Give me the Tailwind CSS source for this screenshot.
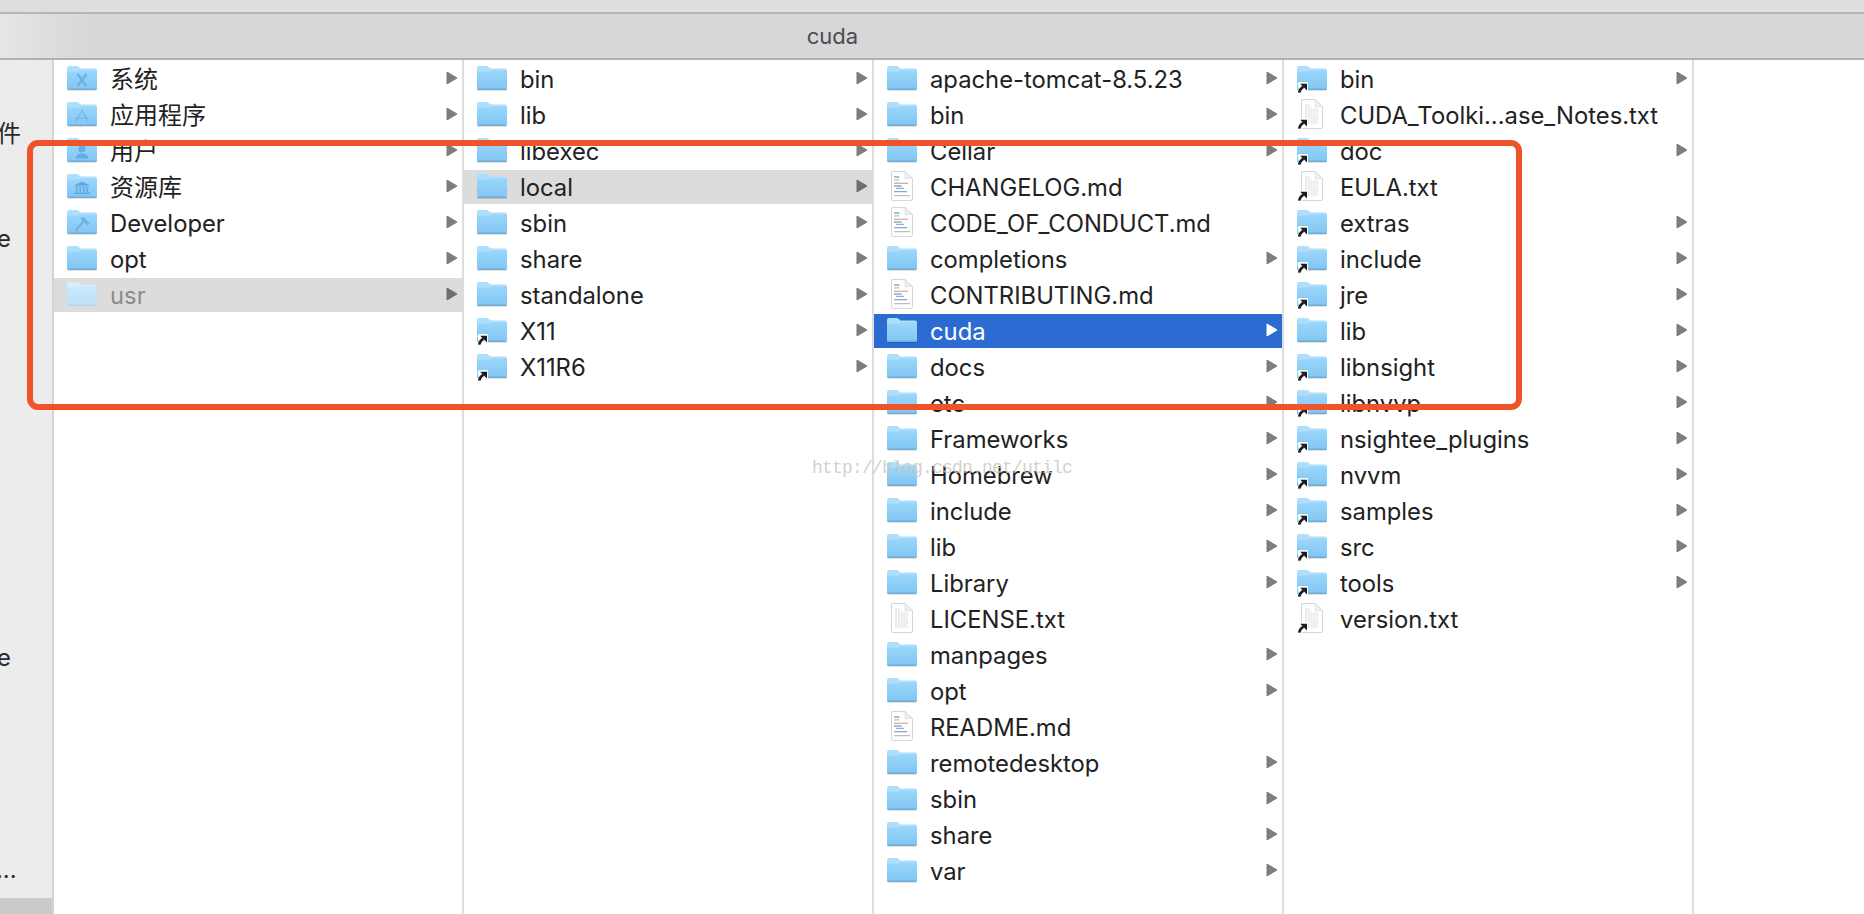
<!DOCTYPE html>
<html lang="zh">
<head>
<meta charset="utf-8">
<title>cuda</title>
<script src="https://cdn.jsdelivr.net/npm/@tailwindcss/browser@4"></script>
</head>
<body class="m-0 bg-white">
<svg class="absolute w-0 h-0" aria-hidden="true">
  <defs>
    <linearGradient id="fg" x1="0" y1="0" x2="0" y2="1"><stop offset="0" stop-color="#9ad6fb"/><stop offset="1" stop-color="#82c7f4"/></linearGradient>
    <linearGradient id="fl" x1="0" y1="0" x2="0" y2="1"><stop offset="0" stop-color="#c9e8fb"/><stop offset="1" stop-color="#bfe3f9"/></linearGradient>
    <g id="f">
      <rect x="0.5" y="27" width="29" height="2" rx="1" fill="#000" opacity="0.12"/>
      <path d="M0 6Q0 4 2 4H9.5Q11 4 12 5L13.5 6.5H28Q30 6.5 30 8.5V26Q30 28 28 28H2Q0 28 0 26Z" fill="#aedefb"/>
      <path d="M0 9.5H12L14 8.5H30V26Q30 27 29 27H1Q0 27 0 26Z" fill="url(#fg)"/>
      <path d="M0 26.6H30V26.8Q30 28 28.5 28H1.5Q0 28 0 26.8Z" fill="#72add6"/>
    </g>
    <g id="u">
      <path d="M0 6Q0 4 2 4H9.5Q11 4 12 5L13.5 6.5H28Q30 6.5 30 8.5V26Q30 28 28 28H2Q0 28 0 26Z" fill="#d7eefc"/>
      <path d="M0 9.5H12L14 8.5H30V26Q30 27 29 27H1Q0 27 0 26Z" fill="url(#fl)"/>
      <path d="M0 26.6H30V26.8Q30 28 28.5 28H1.5Q0 28 0 26.8Z" fill="#b4d6ec"/>
    </g>
    <g id="a">
      <path d="M0.6 32L1.6 27L0.6 22Q0.8 20 3 20H10Q11 20 11 21V28Q11 29 10 29H6.5L3 32Z" fill="#fff" opacity="0.95"/>
      <path d="M2.2 30.6Q2.8 27 6.4 24.6" fill="none" stroke="#1c1c1c" stroke-width="2.5"/>
      <path d="M3.2 21.8H10V28.6Z" fill="#1c1c1c"/>
    </g>
    <g id="d">
      <path d="M4.5 1.5H18L25.5 8.5V29Q25.5 30.5 24 30.5H6Q4.5 30.5 4.5 29Z" fill="#fff" stroke="#d6d6d6"/>
      <path d="M18 1.5V8.5H25.5Z" fill="#f0f0f0" stroke="#d6d6d6" stroke-width="0.6"/>
    </g>
    <g id="m">
      <use href="#d"/>
      <g stroke-width="1.3" fill="none">
        <path d="M7 7H12.3M7 16H14.7M7 21.7H20" stroke="#7ab4c0"/>
        <path d="M7 9.8H12M7 25.7H23" stroke="#c0c0c0"/>
        <path d="M7 13.3H21" stroke="#d8a8a8"/>
        <path d="M9 18.4H17" stroke="#b39bee"/>
      </g>
    </g>
    <g id="t">
      <use href="#d"/>
      <path d="M8 7H13M8 9H14M8 11H21M8 13H22M8 15H20M8 17H22M8 19H21M8 21H22M8 23H20M8 25H21" stroke="#c4c4c4" stroke-width="0.7" stroke-dasharray="2 0.8" fill="none"/>
    </g>
    <g id="r"><path d="M1 1L11 7L1 13Z" fill="currentColor" stroke="currentColor" stroke-width="1" stroke-linejoin="round"/></g>
  </defs>
</svg>

<div class="relative w-[1864px] h-[914px] overflow-hidden bg-white text-[23.8px] text-[#222] font-['Inter','Noto_Sans_CJK_SC',sans-serif] [&_span]:pt-[2px]">

  <header class="h-[60px] bg-[#d7d6d8] border-b-2 border-[#b1b1b1] flex flex-col">
    <div class="h-[14px] shrink-0 bg-[#dfdedf] border-b-2 border-[#b5b5b5]"></div>
    <div class="flex-1 flex items-center justify-center text-[22px] text-[#4c4c4c] bg-linear-to-r from-[#e6e6e6] to-[#d7d6d8] to-[5%] pr-[199px] pt-[1px]">cuda</div>
  </header>

  <div class="flex h-[854px]">
    <aside class="w-[54px] shrink-0 border-r-2 border-[#d4d4d4] bg-[#ececec] flex flex-col overflow-hidden text-[#2a2a2a] whitespace-nowrap">
      <div class="mt-[57px] h-[34px] leading-[34px] ml-[-3px] text-[24px]">件</div>
      <div class="mt-[71px] h-[34px] leading-[34px] ml-[-3px]">e</div>
      <div class="mt-[385px] h-[34px] leading-[34px] ml-[-3px]">e</div>
      <div class="mt-[178px] h-[34px] leading-[34px] ml-[-4px]">...</div>
      <div class="mt-auto h-[16px] bg-[#cbcbcb]"></div>
    </aside>

    <section class="w-[410px] shrink-0 border-r-2 border-[#dcdcdc] pt-[2px]">
      <div class="flex items-center h-[34px] mb-[2px] pl-[13px] pr-[4px]"><svg class="w-[30px] h-[34px] shrink-0" viewBox="0 0 30 34"><use href="#f"/><path d="M10.5 12L19.5 24M19.5 12L10.5 24" stroke="#6cb0e6" stroke-width="2.2" fill="none"/></svg><span class="ml-[13px] text-[24px]">系统</span><svg class="ml-auto mb-[2px] w-[12px] h-[14px] text-[#7d7d7d]" viewBox="0 0 12 14"><use href="#r"/></svg></div>
      <div class="flex items-center h-[34px] mb-[2px] pl-[13px] pr-[4px]"><svg class="w-[30px] h-[34px] shrink-0" viewBox="0 0 30 34"><use href="#f"/><path d="M9 23.5L15 12L21 23.5M8 20H22" stroke="#6cb0e6" stroke-width="1" fill="none"/></svg><span class="ml-[13px] text-[24px]">应用程序</span><svg class="ml-auto mb-[2px] w-[12px] h-[14px] text-[#7d7d7d]" viewBox="0 0 12 14"><use href="#r"/></svg></div>
      <div class="flex items-center h-[34px] mb-[2px] pl-[13px] pr-[4px]"><svg class="w-[30px] h-[34px] shrink-0" viewBox="0 0 30 34"><use href="#f"/><circle cx="15" cy="15" r="3.6" fill="#65ace3"/><path d="M8.5 24.5Q9 20.5 13.5 19.5H16.5Q21 20.5 21.5 24.5Z" fill="#65ace3"/></svg><span class="ml-[13px] text-[24px]">用户</span><svg class="ml-auto mb-[2px] w-[12px] h-[14px] text-[#7d7d7d]" viewBox="0 0 12 14"><use href="#r"/></svg></div>
      <div class="flex items-center h-[34px] mb-[2px] pl-[13px] pr-[4px]"><svg class="w-[30px] h-[34px] shrink-0" viewBox="0 0 30 34"><use href="#f"/><path d="M15 11.5L23 15.5H7ZM8 16.5H22V17.5H8ZM7 22.5H23V24H7ZM9 18H10.5V22H9ZM12.5 18H14V22H12.5ZM16 18H17.5V22H16ZM19.5 18H21V22H19.5Z" fill="#5ea6e0"/></svg><span class="ml-[13px] text-[24px]">资源库</span><svg class="ml-auto mb-[2px] w-[12px] h-[14px] text-[#7d7d7d]" viewBox="0 0 12 14"><use href="#r"/></svg></div>
      <div class="flex items-center h-[34px] mb-[2px] pl-[13px] pr-[4px]"><svg class="w-[30px] h-[34px] shrink-0" viewBox="0 0 30 34"><use href="#f"/><path d="M8.5 25L17.5 14" stroke="#6cb0e6" stroke-width="2" fill="none"/><path d="M13 12L17 11L22.5 17.5L20.5 19.5L16.5 15.5Z" fill="#6cb0e6"/></svg><span class="ml-[13px]">Developer</span><svg class="ml-auto mb-[2px] w-[12px] h-[14px] text-[#7d7d7d]" viewBox="0 0 12 14"><use href="#r"/></svg></div>
      <div class="flex items-center h-[34px] mb-[2px] pl-[13px] pr-[4px]"><svg class="w-[30px] h-[34px] shrink-0" viewBox="0 0 30 34"><use href="#f"/></svg><span class="ml-[13px]">opt</span><svg class="ml-auto mb-[2px] w-[12px] h-[14px] text-[#7d7d7d]" viewBox="0 0 12 14"><use href="#r"/></svg></div>
      <div class="flex items-center h-[34px] mb-[2px] pl-[13px] pr-[4px] bg-[#dcdcdc]"><svg class="w-[30px] h-[34px] shrink-0" viewBox="0 0 30 34"><use href="#u"/></svg><span class="ml-[13px] text-[#8b8b8b]">usr</span><svg class="ml-auto mb-[2px] w-[12px] h-[14px] text-[#6f6f6f]" viewBox="0 0 12 14"><use href="#r"/></svg></div>
    </section>

    <section class="w-[410px] shrink-0 border-r-2 border-[#dcdcdc] pt-[2px]">
      <div class="flex items-center h-[34px] mb-[2px] pl-[13px] pr-[4px]"><svg class="w-[30px] h-[34px] shrink-0" viewBox="0 0 30 34"><use href="#f"/></svg><span class="ml-[13px]">bin</span><svg class="ml-auto mb-[2px] w-[12px] h-[14px] text-[#7d7d7d]" viewBox="0 0 12 14"><use href="#r"/></svg></div>
      <div class="flex items-center h-[34px] mb-[2px] pl-[13px] pr-[4px]"><svg class="w-[30px] h-[34px] shrink-0" viewBox="0 0 30 34"><use href="#f"/></svg><span class="ml-[13px]">lib</span><svg class="ml-auto mb-[2px] w-[12px] h-[14px] text-[#7d7d7d]" viewBox="0 0 12 14"><use href="#r"/></svg></div>
      <div class="flex items-center h-[34px] mb-[2px] pl-[13px] pr-[4px]"><svg class="w-[30px] h-[34px] shrink-0" viewBox="0 0 30 34"><use href="#f"/></svg><span class="ml-[13px]">libexec</span><svg class="ml-auto mb-[2px] w-[12px] h-[14px] text-[#7d7d7d]" viewBox="0 0 12 14"><use href="#r"/></svg></div>
      <div class="flex items-center h-[34px] mb-[2px] pl-[13px] pr-[4px] bg-[#dcdcdc]"><svg class="w-[30px] h-[34px] shrink-0" viewBox="0 0 30 34"><use href="#f"/></svg><span class="ml-[13px]">local</span><svg class="ml-auto mb-[2px] w-[12px] h-[14px] text-[#6f6f6f]" viewBox="0 0 12 14"><use href="#r"/></svg></div>
      <div class="flex items-center h-[34px] mb-[2px] pl-[13px] pr-[4px]"><svg class="w-[30px] h-[34px] shrink-0" viewBox="0 0 30 34"><use href="#f"/></svg><span class="ml-[13px]">sbin</span><svg class="ml-auto mb-[2px] w-[12px] h-[14px] text-[#7d7d7d]" viewBox="0 0 12 14"><use href="#r"/></svg></div>
      <div class="flex items-center h-[34px] mb-[2px] pl-[13px] pr-[4px]"><svg class="w-[30px] h-[34px] shrink-0" viewBox="0 0 30 34"><use href="#f"/></svg><span class="ml-[13px]">share</span><svg class="ml-auto mb-[2px] w-[12px] h-[14px] text-[#7d7d7d]" viewBox="0 0 12 14"><use href="#r"/></svg></div>
      <div class="flex items-center h-[34px] mb-[2px] pl-[13px] pr-[4px]"><svg class="w-[30px] h-[34px] shrink-0" viewBox="0 0 30 34"><use href="#f"/></svg><span class="ml-[13px]">standalone</span><svg class="ml-auto mb-[2px] w-[12px] h-[14px] text-[#7d7d7d]" viewBox="0 0 12 14"><use href="#r"/></svg></div>
      <div class="flex items-center h-[34px] mb-[2px] pl-[13px] pr-[4px]"><svg class="w-[30px] h-[34px] shrink-0" viewBox="0 0 30 34"><use href="#f"/><use href="#a"/></svg><span class="ml-[13px]">X11</span><svg class="ml-auto mb-[2px] w-[12px] h-[14px] text-[#7d7d7d]" viewBox="0 0 12 14"><use href="#r"/></svg></div>
      <div class="flex items-center h-[34px] mb-[2px] pl-[13px] pr-[4px]"><svg class="w-[30px] h-[34px] shrink-0" viewBox="0 0 30 34"><use href="#f"/><use href="#a"/></svg><span class="ml-[13px]">X11R6</span><svg class="ml-auto mb-[2px] w-[12px] h-[14px] text-[#7d7d7d]" viewBox="0 0 12 14"><use href="#r"/></svg></div>
    </section>

    <section class="w-[410px] shrink-0 border-r-2 border-[#dcdcdc] pt-[2px]">
      <div class="flex items-center h-[34px] mb-[2px] pl-[13px] pr-[4px]"><svg class="w-[30px] h-[34px] shrink-0" viewBox="0 0 30 34"><use href="#f"/></svg><span class="ml-[13px]">apache-tomcat-8.5.23</span><svg class="ml-auto mb-[2px] w-[12px] h-[14px] text-[#7d7d7d]" viewBox="0 0 12 14"><use href="#r"/></svg></div>
      <div class="flex items-center h-[34px] mb-[2px] pl-[13px] pr-[4px]"><svg class="w-[30px] h-[34px] shrink-0" viewBox="0 0 30 34"><use href="#f"/></svg><span class="ml-[13px]">bin</span><svg class="ml-auto mb-[2px] w-[12px] h-[14px] text-[#7d7d7d]" viewBox="0 0 12 14"><use href="#r"/></svg></div>
      <div class="flex items-center h-[34px] mb-[2px] pl-[13px] pr-[4px]"><svg class="w-[30px] h-[34px] shrink-0" viewBox="0 0 30 34"><use href="#f"/></svg><span class="ml-[13px]">Cellar</span><svg class="ml-auto mb-[2px] w-[12px] h-[14px] text-[#7d7d7d]" viewBox="0 0 12 14"><use href="#r"/></svg></div>
      <div class="flex items-center h-[34px] mb-[2px] pl-[13px] pr-[4px]"><svg class="w-[30px] h-[34px] shrink-0" viewBox="0 0 30 34"><use href="#m"/></svg><span class="ml-[13px]">CHANGELOG.md</span></div>
      <div class="flex items-center h-[34px] mb-[2px] pl-[13px] pr-[4px]"><svg class="w-[30px] h-[34px] shrink-0" viewBox="0 0 30 34"><use href="#m"/></svg><span class="ml-[13px]">CODE_OF_CONDUCT.md</span></div>
      <div class="flex items-center h-[34px] mb-[2px] pl-[13px] pr-[4px]"><svg class="w-[30px] h-[34px] shrink-0" viewBox="0 0 30 34"><use href="#f"/></svg><span class="ml-[13px]">completions</span><svg class="ml-auto mb-[2px] w-[12px] h-[14px] text-[#7d7d7d]" viewBox="0 0 12 14"><use href="#r"/></svg></div>
      <div class="flex items-center h-[34px] mb-[2px] pl-[13px] pr-[4px]"><svg class="w-[30px] h-[34px] shrink-0" viewBox="0 0 30 34"><use href="#m"/></svg><span class="ml-[13px]">CONTRIBUTING.md</span></div>
      <div class="flex items-center h-[34px] mb-[2px] pl-[13px] pr-[4px] bg-[#2c6bd1] text-white"><svg class="w-[30px] h-[34px] shrink-0" viewBox="0 0 30 34"><use href="#f"/></svg><span class="ml-[13px]">cuda</span><svg class="ml-auto mb-[2px] w-[12px] h-[14px] text-white" viewBox="0 0 12 14"><use href="#r"/></svg></div>
      <div class="flex items-center h-[34px] mb-[2px] pl-[13px] pr-[4px]"><svg class="w-[30px] h-[34px] shrink-0" viewBox="0 0 30 34"><use href="#f"/></svg><span class="ml-[13px]">docs</span><svg class="ml-auto mb-[2px] w-[12px] h-[14px] text-[#7d7d7d]" viewBox="0 0 12 14"><use href="#r"/></svg></div>
      <div class="flex items-center h-[34px] mb-[2px] pl-[13px] pr-[4px]"><svg class="w-[30px] h-[34px] shrink-0" viewBox="0 0 30 34"><use href="#f"/></svg><span class="ml-[13px]">etc</span><svg class="ml-auto mb-[2px] w-[12px] h-[14px] text-[#7d7d7d]" viewBox="0 0 12 14"><use href="#r"/></svg></div>
      <div class="flex items-center h-[34px] mb-[2px] pl-[13px] pr-[4px]"><svg class="w-[30px] h-[34px] shrink-0" viewBox="0 0 30 34"><use href="#f"/></svg><span class="ml-[13px]">Frameworks</span><svg class="ml-auto mb-[2px] w-[12px] h-[14px] text-[#7d7d7d]" viewBox="0 0 12 14"><use href="#r"/></svg></div>
      <div class="flex items-center h-[34px] mb-[2px] pl-[13px] pr-[4px]"><svg class="w-[30px] h-[34px] shrink-0" viewBox="0 0 30 34"><use href="#f"/></svg><span class="ml-[13px]">Homebrew</span><svg class="ml-auto mb-[2px] w-[12px] h-[14px] text-[#7d7d7d]" viewBox="0 0 12 14"><use href="#r"/></svg></div>
      <div class="flex items-center h-[34px] mb-[2px] pl-[13px] pr-[4px]"><svg class="w-[30px] h-[34px] shrink-0" viewBox="0 0 30 34"><use href="#f"/></svg><span class="ml-[13px]">include</span><svg class="ml-auto mb-[2px] w-[12px] h-[14px] text-[#7d7d7d]" viewBox="0 0 12 14"><use href="#r"/></svg></div>
      <div class="flex items-center h-[34px] mb-[2px] pl-[13px] pr-[4px]"><svg class="w-[30px] h-[34px] shrink-0" viewBox="0 0 30 34"><use href="#f"/></svg><span class="ml-[13px]">lib</span><svg class="ml-auto mb-[2px] w-[12px] h-[14px] text-[#7d7d7d]" viewBox="0 0 12 14"><use href="#r"/></svg></div>
      <div class="flex items-center h-[34px] mb-[2px] pl-[13px] pr-[4px]"><svg class="w-[30px] h-[34px] shrink-0" viewBox="0 0 30 34"><use href="#f"/></svg><span class="ml-[13px]">Library</span><svg class="ml-auto mb-[2px] w-[12px] h-[14px] text-[#7d7d7d]" viewBox="0 0 12 14"><use href="#r"/></svg></div>
      <div class="flex items-center h-[34px] mb-[2px] pl-[13px] pr-[4px]"><svg class="w-[30px] h-[34px] shrink-0" viewBox="0 0 30 34"><use href="#t"/></svg><span class="ml-[13px]">LICENSE.txt</span></div>
      <div class="flex items-center h-[34px] mb-[2px] pl-[13px] pr-[4px]"><svg class="w-[30px] h-[34px] shrink-0" viewBox="0 0 30 34"><use href="#f"/></svg><span class="ml-[13px]">manpages</span><svg class="ml-auto mb-[2px] w-[12px] h-[14px] text-[#7d7d7d]" viewBox="0 0 12 14"><use href="#r"/></svg></div>
      <div class="flex items-center h-[34px] mb-[2px] pl-[13px] pr-[4px]"><svg class="w-[30px] h-[34px] shrink-0" viewBox="0 0 30 34"><use href="#f"/></svg><span class="ml-[13px]">opt</span><svg class="ml-auto mb-[2px] w-[12px] h-[14px] text-[#7d7d7d]" viewBox="0 0 12 14"><use href="#r"/></svg></div>
      <div class="flex items-center h-[34px] mb-[2px] pl-[13px] pr-[4px]"><svg class="w-[30px] h-[34px] shrink-0" viewBox="0 0 30 34"><use href="#m"/></svg><span class="ml-[13px]">README.md</span></div>
      <div class="flex items-center h-[34px] mb-[2px] pl-[13px] pr-[4px]"><svg class="w-[30px] h-[34px] shrink-0" viewBox="0 0 30 34"><use href="#f"/></svg><span class="ml-[13px]">remotedesktop</span><svg class="ml-auto mb-[2px] w-[12px] h-[14px] text-[#7d7d7d]" viewBox="0 0 12 14"><use href="#r"/></svg></div>
      <div class="flex items-center h-[34px] mb-[2px] pl-[13px] pr-[4px]"><svg class="w-[30px] h-[34px] shrink-0" viewBox="0 0 30 34"><use href="#f"/></svg><span class="ml-[13px]">sbin</span><svg class="ml-auto mb-[2px] w-[12px] h-[14px] text-[#7d7d7d]" viewBox="0 0 12 14"><use href="#r"/></svg></div>
      <div class="flex items-center h-[34px] mb-[2px] pl-[13px] pr-[4px]"><svg class="w-[30px] h-[34px] shrink-0" viewBox="0 0 30 34"><use href="#f"/></svg><span class="ml-[13px]">share</span><svg class="ml-auto mb-[2px] w-[12px] h-[14px] text-[#7d7d7d]" viewBox="0 0 12 14"><use href="#r"/></svg></div>
      <div class="flex items-center h-[34px] mb-[2px] pl-[13px] pr-[4px]"><svg class="w-[30px] h-[34px] shrink-0" viewBox="0 0 30 34"><use href="#f"/></svg><span class="ml-[13px]">var</span><svg class="ml-auto mb-[2px] w-[12px] h-[14px] text-[#7d7d7d]" viewBox="0 0 12 14"><use href="#r"/></svg></div>
    </section>

    <section class="w-[410px] shrink-0 border-r-2 border-[#dcdcdc] pt-[2px]">
      <div class="flex items-center h-[34px] mb-[2px] pl-[13px] pr-[4px]"><svg class="w-[30px] h-[34px] shrink-0" viewBox="0 0 30 34"><use href="#f"/><use href="#a"/></svg><span class="ml-[13px]">bin</span><svg class="ml-auto mb-[2px] w-[12px] h-[14px] text-[#7d7d7d]" viewBox="0 0 12 14"><use href="#r"/></svg></div>
      <div class="flex items-center h-[34px] mb-[2px] pl-[13px] pr-[4px]"><svg class="w-[30px] h-[34px] shrink-0" viewBox="0 0 30 34"><use href="#t"/><use href="#a"/></svg><span class="ml-[13px]">CUDA_Toolki...ase_Notes.txt</span></div>
      <div class="flex items-center h-[34px] mb-[2px] pl-[13px] pr-[4px]"><svg class="w-[30px] h-[34px] shrink-0" viewBox="0 0 30 34"><use href="#f"/><use href="#a"/></svg><span class="ml-[13px]">doc</span><svg class="ml-auto mb-[2px] w-[12px] h-[14px] text-[#7d7d7d]" viewBox="0 0 12 14"><use href="#r"/></svg></div>
      <div class="flex items-center h-[34px] mb-[2px] pl-[13px] pr-[4px]"><svg class="w-[30px] h-[34px] shrink-0" viewBox="0 0 30 34"><use href="#t"/><use href="#a"/></svg><span class="ml-[13px]">EULA.txt</span></div>
      <div class="flex items-center h-[34px] mb-[2px] pl-[13px] pr-[4px]"><svg class="w-[30px] h-[34px] shrink-0" viewBox="0 0 30 34"><use href="#f"/><use href="#a"/></svg><span class="ml-[13px]">extras</span><svg class="ml-auto mb-[2px] w-[12px] h-[14px] text-[#7d7d7d]" viewBox="0 0 12 14"><use href="#r"/></svg></div>
      <div class="flex items-center h-[34px] mb-[2px] pl-[13px] pr-[4px]"><svg class="w-[30px] h-[34px] shrink-0" viewBox="0 0 30 34"><use href="#f"/><use href="#a"/></svg><span class="ml-[13px]">include</span><svg class="ml-auto mb-[2px] w-[12px] h-[14px] text-[#7d7d7d]" viewBox="0 0 12 14"><use href="#r"/></svg></div>
      <div class="flex items-center h-[34px] mb-[2px] pl-[13px] pr-[4px]"><svg class="w-[30px] h-[34px] shrink-0" viewBox="0 0 30 34"><use href="#f"/><use href="#a"/></svg><span class="ml-[13px]">jre</span><svg class="ml-auto mb-[2px] w-[12px] h-[14px] text-[#7d7d7d]" viewBox="0 0 12 14"><use href="#r"/></svg></div>
      <div class="flex items-center h-[34px] mb-[2px] pl-[13px] pr-[4px]"><svg class="w-[30px] h-[34px] shrink-0" viewBox="0 0 30 34"><use href="#f"/></svg><span class="ml-[13px]">lib</span><svg class="ml-auto mb-[2px] w-[12px] h-[14px] text-[#7d7d7d]" viewBox="0 0 12 14"><use href="#r"/></svg></div>
      <div class="flex items-center h-[34px] mb-[2px] pl-[13px] pr-[4px]"><svg class="w-[30px] h-[34px] shrink-0" viewBox="0 0 30 34"><use href="#f"/><use href="#a"/></svg><span class="ml-[13px]">libnsight</span><svg class="ml-auto mb-[2px] w-[12px] h-[14px] text-[#7d7d7d]" viewBox="0 0 12 14"><use href="#r"/></svg></div>
      <div class="flex items-center h-[34px] mb-[2px] pl-[13px] pr-[4px]"><svg class="w-[30px] h-[34px] shrink-0" viewBox="0 0 30 34"><use href="#f"/><use href="#a"/></svg><span class="ml-[13px]">libnvvp</span><svg class="ml-auto mb-[2px] w-[12px] h-[14px] text-[#7d7d7d]" viewBox="0 0 12 14"><use href="#r"/></svg></div>
      <div class="flex items-center h-[34px] mb-[2px] pl-[13px] pr-[4px]"><svg class="w-[30px] h-[34px] shrink-0" viewBox="0 0 30 34"><use href="#f"/><use href="#a"/></svg><span class="ml-[13px]">nsightee_plugins</span><svg class="ml-auto mb-[2px] w-[12px] h-[14px] text-[#7d7d7d]" viewBox="0 0 12 14"><use href="#r"/></svg></div>
      <div class="flex items-center h-[34px] mb-[2px] pl-[13px] pr-[4px]"><svg class="w-[30px] h-[34px] shrink-0" viewBox="0 0 30 34"><use href="#f"/><use href="#a"/></svg><span class="ml-[13px]">nvvm</span><svg class="ml-auto mb-[2px] w-[12px] h-[14px] text-[#7d7d7d]" viewBox="0 0 12 14"><use href="#r"/></svg></div>
      <div class="flex items-center h-[34px] mb-[2px] pl-[13px] pr-[4px]"><svg class="w-[30px] h-[34px] shrink-0" viewBox="0 0 30 34"><use href="#f"/><use href="#a"/></svg><span class="ml-[13px]">samples</span><svg class="ml-auto mb-[2px] w-[12px] h-[14px] text-[#7d7d7d]" viewBox="0 0 12 14"><use href="#r"/></svg></div>
      <div class="flex items-center h-[34px] mb-[2px] pl-[13px] pr-[4px]"><svg class="w-[30px] h-[34px] shrink-0" viewBox="0 0 30 34"><use href="#f"/><use href="#a"/></svg><span class="ml-[13px]">src</span><svg class="ml-auto mb-[2px] w-[12px] h-[14px] text-[#7d7d7d]" viewBox="0 0 12 14"><use href="#r"/></svg></div>
      <div class="flex items-center h-[34px] mb-[2px] pl-[13px] pr-[4px]"><svg class="w-[30px] h-[34px] shrink-0" viewBox="0 0 30 34"><use href="#f"/><use href="#a"/></svg><span class="ml-[13px]">tools</span><svg class="ml-auto mb-[2px] w-[12px] h-[14px] text-[#7d7d7d]" viewBox="0 0 12 14"><use href="#r"/></svg></div>
      <div class="flex items-center h-[34px] mb-[2px] pl-[13px] pr-[4px]"><svg class="w-[30px] h-[34px] shrink-0" viewBox="0 0 30 34"><use href="#t"/><use href="#a"/></svg><span class="ml-[13px]">version.txt</span></div>
    </section>
    <div class="flex-1"></div>
  </div>

  <div class="absolute left-[27px] top-[140px] w-[1495px] h-[270px] border-[6px] border-[#f0522a] rounded-[11px]"></div>
  <div class="absolute left-[812px] top-[458px] text-[18px] tracking-[-0.8px] leading-[20px] text-[#c9c9c0]/85 font-['Liberation_Mono',monospace]">http://blog.csdn.net/utilc</div>
</div>
</body>
</html>
